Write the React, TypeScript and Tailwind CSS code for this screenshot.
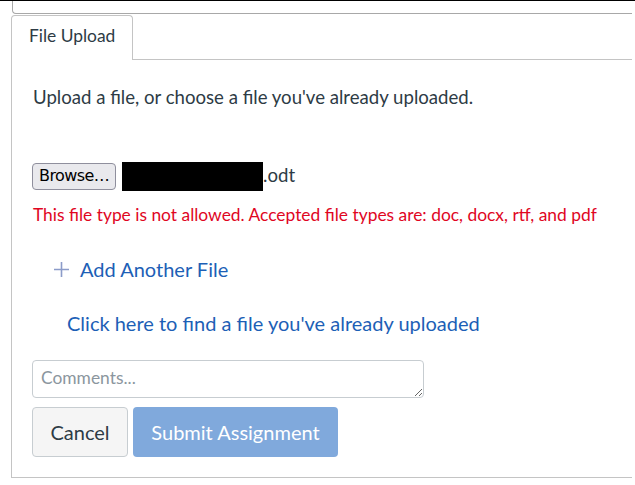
import React from 'react';

const LATO = 'font-["Lato","Noto_Sans",sans-serif]';

function PlusIcon() {
  return (
    <svg width="17" height="17" viewBox="0 0 17 17" className="shrink-0">
      <path d="M8.5 1v15M1 8.5h15" stroke="#8c9cc9" strokeWidth="1.6" fill="none" />
    </svg>
  );
}

export default function App() {
  return (
    <div className={`w-[635px] h-[485px] bg-white overflow-hidden text-[#2d3b45] ${LATO}`}>
      <div className="h-px bg-black" />
      <div className="ml-[12px] w-[620px] h-[13px] border-l border-b border-[#a8a8a8] rounded-bl-[4px]" />

      <div className="mt-[1px] ml-[11px] w-[621px]">
        {/* tabs */}
        <div className="flex items-end h-[45px]">
          <div className="w-[122px] h-[45px] border border-b-0 border-[#c4c4c4] rounded-t-[4px] bg-white flex items-center pb-[4px] pl-[17px] text-[17.4px]">
            File Upload
          </div>
          <div className="flex-1 border-b border-[#c4c4c4]" />
        </div>

        {/* panel */}
        <div className="h-[418px] border-l border-b border-[#c4c4c4] pl-[21px] pt-[26px]">
          <p className="text-[18.6px] leading-[22px]">Upload a file, or choose a file you've already uploaded.</p>

          <div className="mt-[53px] flex items-center h-[30px]">
            <button className='-ml-px h-[27px] px-[6px] rounded-[4px] border border-[#8f8f9d] bg-[#e9e9ed] text-[16px] text-black font-["DejaVu_Sans",sans-serif] tracking-[-0.6px] leading-none'>
              Browse…
            </button>
            <div className="ml-[6px] w-[141px] h-[29px] bg-black" />
            <span className="text-[18.6px]">.odt</span>
          </div>

          <p className="mt-[13px] text-[17.4px] leading-[22px] text-[#e0061f]">
            This file type is not allowed. Accepted file types are: doc, docx, rtf, and pdf
          </p>

          <div className="mt-[31px] ml-[20px] flex items-center gap-[10px] text-[20px] text-[#1d5fb6] leading-[24px]">
            <PlusIcon />
            <span>Add Another File</span>
          </div>

          <p className="mt-[30px] ml-[34px] text-[20px] text-[#1d5fb6] leading-[24px]">
            Click here to find a file you've already uploaded
          </p>

          <textarea
            placeholder="Comments..."
            className="mt-[25px] -ml-px block w-[392px] h-[38px] border border-[#c7cdd1] rounded-[4px] px-[8px] py-[6px] text-[17.4px] leading-[22px] placeholder:text-[#8b969e] outline-none"
          />

          <div className="mt-[9px] -ml-px flex gap-[5px]">
            <button className="w-[96px] h-[50px] rounded-[4px] border border-[#c7cdd1] bg-[#f5f5f5] text-[20px] text-[#2d3b45]">
              Cancel
            </button>
            <button className="w-[205px] h-[50px] rounded-[4px] bg-[#80a9dc] text-[20px] text-white">
              Submit Assignment
            </button>
          </div>
        </div>
      </div>
    </div>
  );
}
